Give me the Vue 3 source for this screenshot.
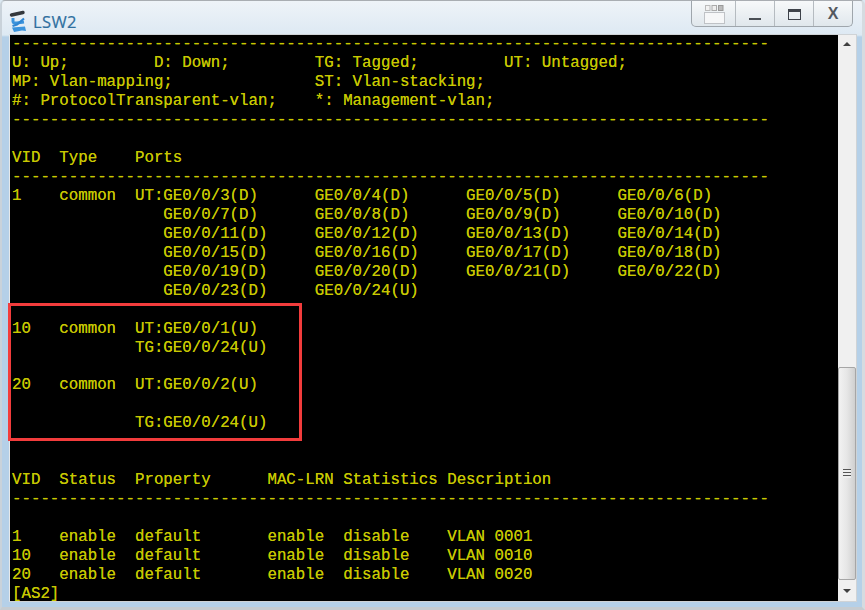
<script setup>
const dash = '-'.repeat(80)
const lines = [
  dash,
  'U: Up;         D: Down;         TG: Tagged;         UT: Untagged;',
  'MP: Vlan-mapping;               ST: Vlan-stacking;',
  '#: ProtocolTransparent-vlan;    *: Management-vlan;',
  dash,
  '',
  'VID  Type    Ports',
  dash,
  '1    common  UT:GE0/0/3(D)      GE0/0/4(D)      GE0/0/5(D)      GE0/0/6(D)',
  '                GE0/0/7(D)      GE0/0/8(D)      GE0/0/9(D)      GE0/0/10(D)',
  '                GE0/0/11(D)     GE0/0/12(D)     GE0/0/13(D)     GE0/0/14(D)',
  '                GE0/0/15(D)     GE0/0/16(D)     GE0/0/17(D)     GE0/0/18(D)',
  '                GE0/0/19(D)     GE0/0/20(D)     GE0/0/21(D)     GE0/0/22(D)',
  '                GE0/0/23(D)     GE0/0/24(U)',
  '',
  '10   common  UT:GE0/0/1(U)',
  '             TG:GE0/0/24(U)',
  '',
  '20   common  UT:GE0/0/2(U)',
  '',
  '             TG:GE0/0/24(U)',
  '',
  '',
  'VID  Status  Property      MAC-LRN Statistics Description',
  dash,
  '',
  '1    enable  default       enable  disable    VLAN 0001',
  '10   enable  default       enable  disable    VLAN 0010',
  '20   enable  default       enable  disable    VLAN 0020',
  '[AS2]'
]
</script>

<template>
  <div class="window">
    <header class="titlebar">
      <div class="title">
        <svg class="logo" width="20" height="24" viewBox="0 0 20 24">
          <path d="M2.5 5 L14 2.5" stroke="#33373c" stroke-width="3.4" stroke-linecap="round" fill="none" />
          <path d="M4 8 L4 11.5 Q4 13.5 8 13 L15 12" stroke="#3b93dc" stroke-width="3" fill="none" />
          <path d="M15 8.5 L8 14.5 L3.5 16" stroke="#2f86d2" stroke-width="2.2" fill="none" />
          <path d="M3 17.5 L16 16.5 L17 21 L13 20.5 L5 22 Z" fill="#3b93dc" />
        </svg>
        <span class="name">LSW2</span>
      </div>
      <div class="controls">
        <button class="ctl">
          <svg width="24" height="22" viewBox="0 0 24 22">
            <rect x="2.5" y="9.5" width="20" height="11" fill="#f6f7f8" stroke="#bfc2c6" />
            <rect x="3.5" y="2.5" width="4.5" height="5" fill="#f2f2f2" stroke="#bbb" />
            <rect x="10" y="2.5" width="4.5" height="5" fill="#eee" stroke="#aaa" />
            <rect x="16.5" y="2.5" width="4.5" height="5" fill="#bbb" stroke="#999" />
          </svg>
        </button>
        <button class="ctl"><span class="min"></span></button>
        <button class="ctl"><span class="max"></span></button>
        <button class="ctl close">X</button>
      </div>
    </header>
    <main class="client">
      <div class="terminal">
        <pre class="screen"><template v-for="(l, i) in lines" :key="i">{{ l }}
</template></pre>
        <div class="mark"></div>
      </div>
      <aside class="scrollbar">
        <div class="arrow up"></div>
        <div class="track">
          <div class="thumb"><span class="grip"></span></div>
        </div>
        <div class="arrow down"></div>
      </aside>
    </main>
  </div>
</template>

<style scoped>
.window {
  width: 865px;
  height: 610px;
  box-sizing: border-box;
  padding: 0 5px 5px 7px;
  background: linear-gradient(180deg, #eef3f8 0, #dde9f3 34px, #b5d0e8 36px, #b5d0e8 100%);
  border-style: solid;
  border-width: 1px 3px 3px 2px;
  border-color: #a9adb2 #d5dbe0 #c6ccd1 #c9d2da;
  border-radius: 5px 5px 0 0;
  display: flex;
  flex-direction: column;
  overflow: hidden;
}
.titlebar {
  height: 33px;
  display: flex;
  justify-content: space-between;
  flex: none;
}
.title {
  display: flex;
  align-items: center;
  gap: 4px;
  padding-top: 8px;
}
.name {
  font: 16.5px "Open Sans", "Liberation Sans", sans-serif;
  -webkit-text-stroke: 0.2px #2f6f9f;
  color: #2f6f9f;
  letter-spacing: 0.4px;
}
.controls {
  display: flex;
  height: 25px;
  margin-right: 4px;
  border: 1px solid #9fa6ac;
  border-top: 0;
  border-radius: 0 0 5px 5px;
  background: linear-gradient(180deg, #f7f9fa, #e0e7ec);
}
.ctl {
  width: 39px;
  padding: 0;
  border: 0;
  border-left: 1px solid #b5bbc0;
  background: none;
  display: flex;
  align-items: center;
  justify-content: center;
  font: bold 16px "Liberation Sans", sans-serif;
  color: #54595f;
}
.ctl:first-child {
  border-left: 0;
  width: 43px;
}
.min {
  width: 12px;
  height: 2px;
  margin-top: 11px;
  background: #4a4f55;
}
.max {
  width: 11px;
  height: 7px;
  border: 1px solid #3e434a;
  border-top-width: 3px;
  margin-top: 2px;
}
.client {
  flex: 1;
  min-height: 0;
  display: flex;
  border: 1px solid #cfd3d6;
  border-left-color: #e6e9eb;
  background: #f0f0f0;
}
.terminal {
  flex: 1;
  min-height: 0;
  position: relative;
  background: #000;
}
.screen {
  margin: 0;
  padding: 0 0 0 2px;
  font-family: "Liberation Mono", monospace;
  font-size: 15.77px;
  line-height: 18.97px;
  color: #c8c800;
  text-shadow: 0 0 0.5px #b8b800;
}
.mark {
  position: absolute;
  left: -2px;
  top: 268px;
  width: 288px;
  height: 132px;
  border: 3px solid #f23c3c;
}
.scrollbar {
  width: 18px;
  flex: none;
  display: flex;
  flex-direction: column;
  background: #f0f0f0;
}
.arrow {
  flex: none;
  display: flex;
  align-items: center;
  justify-content: center;
}
.up {
  height: 18px;
}
.down {
  height: 21px;
}
.arrow::before {
  content: "";
  border-left: 4px solid transparent;
  border-right: 4px solid transparent;
}
.up::before {
  border-bottom: 4px solid #404040;
}
.down::before {
  border-top: 4px solid #404040;
}
.track {
  flex: 1;
  display: flex;
  flex-direction: column;
  justify-content: flex-end;
}
.thumb {
  height: 213px;
  box-sizing: border-box;
  border: 1px solid #a6a6a6;
  border-radius: 2px;
  background: linear-gradient(90deg, #f2f2f2, #e6e6e6 50%, #cfcfcf);
  display: flex;
  align-items: center;
  justify-content: center;
}
.grip {
  width: 8px;
  height: 9px;
  background: repeating-linear-gradient(180deg, #555 0 1px, #eee 1px 3px);
}
</style>

<style>
html, body {
  margin: 0;
  background: #dbe8f2;
}
</style>
